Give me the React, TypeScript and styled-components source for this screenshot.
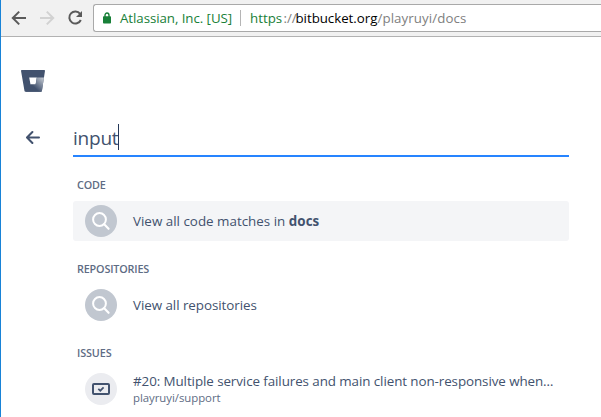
import React from "react";
import styled, { createGlobalStyle } from "styled-components";

const GlobalStyle = createGlobalStyle`
  * { box-sizing: border-box; }
  body {
    margin: 0;
    background: #fff;
    font-family: "Open Sans", "Noto Sans", sans-serif;
    overflow: hidden;
  }
`;

const Window = styled.div`
  height: 417px;
  border-left: 1px solid #1883d7;
  overflow: hidden;
`;

const Toolbar = styled.header`
  display: flex;
  height: 37px;
  padding: 4px 0 4px 8px;
  background: #f1f1f1;
  border-bottom: 1px solid #b2b2b2;
`;

const NavButtons = styled.div`
  display: flex;
  gap: 8px;
  padding-top: 4px;
  width: 84px;
  flex: none;
  svg { display: block; width: 20px; height: 20px; }
`;

const AddressBar = styled.div`
  display: flex;
  align-items: center;
  flex: 1;
  height: 28px;
  padding-left: 9px;
  border: 1px solid #a9a9a9;
  border-right: 0;
  border-radius: 3px 0 0 3px;
  background: #fff;
  font-size: 13.3px;
  line-height: 20px;
  white-space: nowrap;
`;

const Lock = styled.svg`
  display: block;
  flex: none;
  width: 8px;
  height: 12px;
  margin: 0 9px 1px 0;
`;

const UrlPart = styled.span<{ $color: string; $width: number; $spacing: number }>`
  flex: none;
  width: ${(p) => p.$width}px;
  color: ${(p) => p.$color};
  letter-spacing: ${(p) => p.$spacing}px;
`;

const Divider = styled.span`
  width: 1px;
  height: 16px;
  margin: 0 9px 0 7.5px;
  background: #b5b5b5;
`;

const Drawer = styled.main`
  display: grid;
  grid-template-columns: 72px 496px;
  color: #42526e;
`;

const Rail = styled.nav`
  padding: 33px 0 0 20px;
  svg { display: block; }
`;

const BackArrow = styled.svg`
  width: 16px;
  height: 14px;
  margin: 38px 0 0 4px;
`;

const Panel = styled.section`
  padding-top: 84px;
`;

const SearchField = styled.div`
  display: flex;
  height: 36px;
  padding-top: 3px;
  border-bottom: 2px solid #2684ff;
  font-size: 19px;
  line-height: 29px;
  letter-spacing: -0.22px;
`;

const Caret = styled.span`
  width: 1px;
  height: 26px;
  background: #253858;
`;

const Group = styled.div`
  padding-top: 20px;
`;

const GroupTitle = styled.h2<{ $spacing: number }>`
  margin: 0 0 8px;
  padding-left: 4px;
  color: #5e6c84;
  font-size: 10.8px;
  font-weight: 600;
  line-height: 16px;
  letter-spacing: ${(p) => p.$spacing}px;
`;

const ResultRow = styled.div<{ $active?: boolean }>`
  display: flex;
  align-items: center;
  gap: 16px;
  height: 40px;
  padding-left: 12px;
  border-radius: 3px;
  background: ${(p) => (p.$active ? "#f4f5f7" : "transparent")};
`;

const Avatar = styled.span<{ $color: string }>`
  display: flex;
  align-items: center;
  justify-content: center;
  flex: none;
  width: 32px;
  height: 32px;
  border-radius: 50%;
  background: ${(p) => p.$color};
`;

const Label = styled.div<{ $spacing: number }>`
  font-size: 13.4px;
  line-height: 18px;
  letter-spacing: ${(p) => p.$spacing}px;
  white-space: nowrap;
  strong { font-weight: 700; letter-spacing: 0.06px; }
`;

const SubLabel = styled.div`
  color: #5e6c84;
  font-size: 11.4px;
  line-height: 16px;
  letter-spacing: -0.04px;
`;

const SearchIcon = () => (
  <Avatar $color="#c1c7d0">
    <svg width="32" height="32" viewBox="0 0 32 32" fill="none" stroke="#fff">
      <circle cx="14.5" cy="14.5" r="6.4" strokeWidth="2" />
      <path d="M19.2 19.2 L23.6 23.8" strokeWidth="2.1" strokeLinecap="round" />
    </svg>
  </Avatar>
);

const IssueIcon = () => (
  <Avatar $color="#ebecf0">
    <svg width="18" height="12" viewBox="0 0 18 12" fill="none" stroke="#42526e" strokeWidth="2">
      <rect x="1" y="1" width="16" height="10" rx="1" />
      <path d="M6.3 5.8 L8.3 7.7 L11.6 4.3" strokeWidth="1.7" />
    </svg>
  </Avatar>
);

const BucketLogo = () => (
  <svg width="25" height="22" viewBox="0 0 25 22">
    <defs>
      <linearGradient id="bucketShade" x1="23" y1="8" x2="14" y2="18" gradientUnits="userSpaceOnUse">
        <stop offset="0.1" stopColor="#b9c0ca" />
        <stop offset="1" stopColor="#42526e" />
      </linearGradient>
    </defs>
    <path d="M.8 0 H23.2 Q24.1 0 24 .8 L20.9 21 Q20.7 21.7 20 21.7 H4.4 Q3.7 21.7 3.5 21 L0 .8 Q0 0 .8 0 Z M8.2 7.5 L9.5 14.4 H14.6 L15.8 7.5 Z" fill="#42526e" fillRule="evenodd" />
    <path d="M15.8 7.5 H23 L20.9 21 Q20.7 21.7 20 21.7 H4.6 L9.5 14.4 H14.6 Z" fill="url(#bucketShade)" />
  </svg>
);

export default function App() {
  return (
    <>
      <GlobalStyle />
      <Window>
        <Toolbar>
          <NavButtons>
            <svg viewBox="0 0 20 20" fill="none" stroke="#5a5a5a" strokeWidth="2">
              <path d="M17 10 H4.2 M10.2 3.6 L3.8 10 L10.2 16.4" />
            </svg>
            <svg viewBox="0 0 20 20" fill="none" stroke="#d2d2d2" strokeWidth="2">
              <path d="M3 10 H15.8 M9.8 3.6 L16.2 10 L9.8 16.4" />
            </svg>
            <svg viewBox="0 0 20 20" fill="none" stroke="#5a5a5a" strokeWidth="2">
              <path d="M15.1 5.9 A6 6 0 1 0 15.8 12" />
              <path d="M17 3 V9 H11 Z" fill="#5a5a5a" stroke="none" />
            </svg>
          </NavButtons>
          <AddressBar>
            <Lock viewBox="0 0 8 12">
              <path d="M2 5 V3.2 A2 2.2 0 0 1 6 3.2 V5" fill="none" stroke="#188038" strokeWidth="1.4" />
              <rect y="4.3" width="8" height="7.2" rx="0.8" fill="#188038" />
            </Lock>
            <UrlPart $color="#188038" $width={112.5} $spacing={-0.06}>Atlassian, Inc. [US]</UrlPart>
            <Divider />
            <UrlPart $color="#188038" $width={33.5} $spacing={0}>https</UrlPart>
            <UrlPart $color="#808080" $width={12} $spacing={-0.1}>://</UrlPart>
            <UrlPart $color="#000" $width={82} $spacing={-0.03}>bitbucket.org</UrlPart>
            <UrlPart $color="#808080" $width={90} $spacing={0.08}>/playruyi/docs</UrlPart>
          </AddressBar>
        </Toolbar>
        <Drawer>
          <Rail>
            <BucketLogo />
            <BackArrow viewBox="0 0 16 14" fill="none" stroke="#42526e" strokeWidth="2" strokeLinecap="round" strokeLinejoin="round">
              <path d="M2.3 7.5 H14 M7.4 2 L2 7.5 L7.4 13" />
            </BackArrow>
          </Rail>
          <Panel>
            <SearchField>
              <span>input</span>
              <Caret />
            </SearchField>
            <Group>
              <GroupTitle $spacing={-0.16}>CODE</GroupTitle>
              <ResultRow $active>
                <SearchIcon />
                <Label $spacing={0}>View all code matches in <strong>docs</strong></Label>
              </ResultRow>
            </Group>
            <Group>
              <GroupTitle $spacing={-0.16}>REPOSITORIES</GroupTitle>
              <ResultRow>
                <SearchIcon />
                <Label $spacing={-0.06}>View all repositories</Label>
              </ResultRow>
            </Group>
            <Group>
              <GroupTitle $spacing={-0.1}>ISSUES</GroupTitle>
              <ResultRow>
                <IssueIcon />
                <div>
                  <Label $spacing={-0.085}>#20: Multiple service failures and main client non-responsive when…</Label>
                  <SubLabel>playruyi/support</SubLabel>
                </div>
              </ResultRow>
            </Group>
          </Panel>
        </Drawer>
      </Window>
    </>
  );
}
